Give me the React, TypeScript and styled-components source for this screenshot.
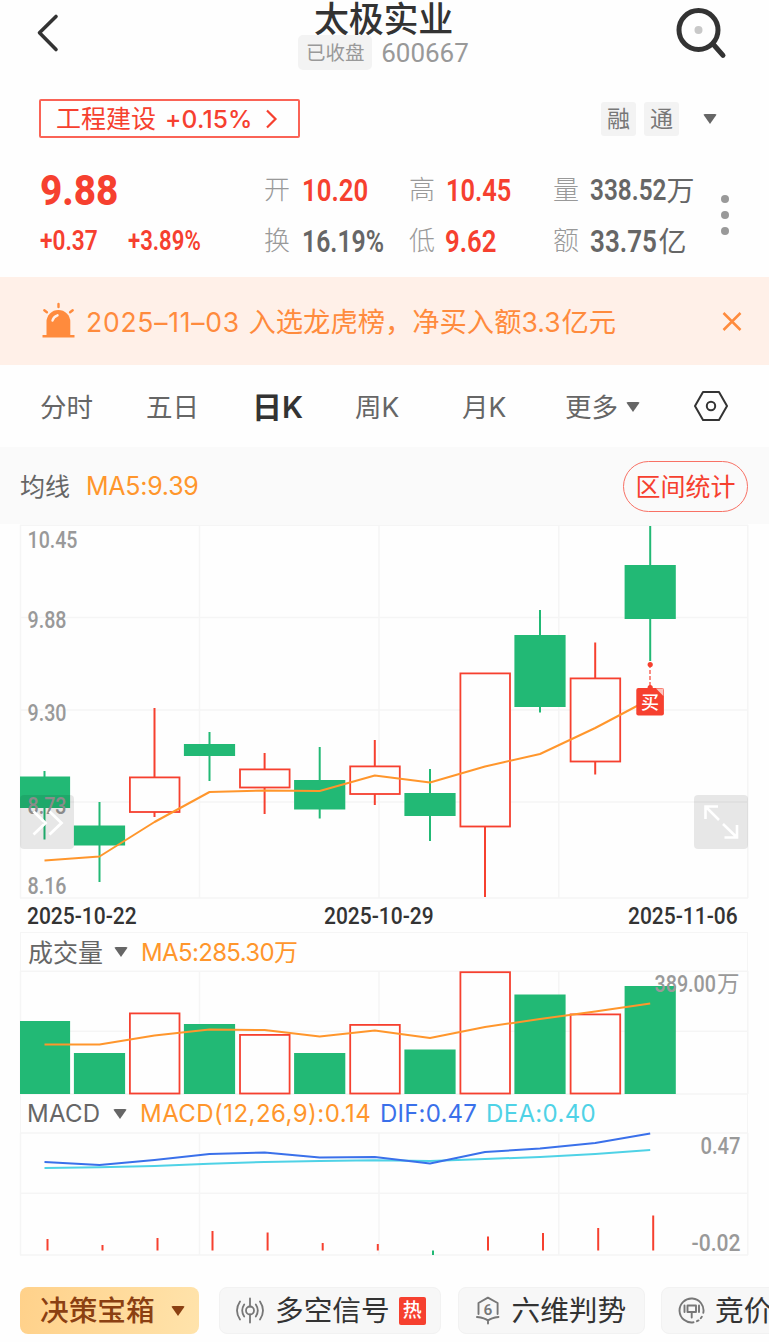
import React from "react";
import styled, { createGlobalStyle } from "styled-components";

const RED = "#f6402f";
const GREEN = "#22b975";
const ORANGE = "#ff8b3d";
const GOLD = "#ff962c";
const BLUE = "#3a70ea";
const CYAN = "#4fd2e6";
const GRID = "#f5f5f5";

const Global = createGlobalStyle`
  * { box-sizing: border-box; }
  body { margin: 0; background: #fefefe; }
`;

const Page = styled.main`
  width: 769px;
  height: 1342px;
  overflow: hidden;
  display: flex;
  flex-direction: column;
  background: #fefefe;
  color: #666;
  font-family: Inter, "Noto Sans CJK SC", sans-serif;
  white-space: nowrap;
`;

const Din = styled.span<{ w: number; size: number; squeeze?: number; weight?: number }>`
  display: inline-block;
  width: ${(p) => p.w}px;
  font-family: Roboto, sans-serif;
  font-size: ${(p) => p.size}px;
  font-weight: ${(p) => p.weight ?? 600};
  line-height: 1;
  transform: scaleX(${(p) => p.squeeze ?? 0.84});
  transform-origin: left center;
`;

const Header = styled.header`
  height: 78px;
  flex: none;
  display: grid;
  grid-template-columns: 58px 1fr 58px;
  padding: 0 36px 0 36px;
`;

const TitleBlock = styled.div`
  display: flex;
  flex-direction: column;
  align-items: center;
  padding: 0 2px 0 0;
`;

const Title = styled.h1`
  margin: 0 0 -4px;
  height: 39px;
  font-size: 35px;
  line-height: 38px;
  font-weight: 500;
  letter-spacing: -0.3px;
  color: #333;
`;

const Sub = styled.div`
  display: flex;
  align-items: center;
  gap: 9px;
  height: 35px;
`;

const StatusBadge = styled.span`
  width: 74px;
  height: 35px;
  border-radius: 5px;
  background: #f3f3f3;
  color: #999;
  font-size: 19.5px;
  line-height: 36px;
  text-align: center;
`;

const Code = styled.span`
  font-family: Roboto, sans-serif;
  font-size: 26px;
  color: #999;
`;

const TagRow = styled.div`
  height: 60px;
  flex: none;
  display: flex;
  align-items: flex-start;
  justify-content: space-between;
  padding: 21px 52px 0 39px;
`;

const SectorTag = styled.div`
  width: 261px;
  height: 39px;
  border: 2px solid #fa6356;
  border-radius: 2px;
  display: flex;
  align-items: center;
  padding: 1px 20px 0 15px;
  color: ${RED};
  font-size: 25px;
  line-height: 35px;
`;

const SectorChange = styled.span`
  margin-left: 9px;
  flex: 1;
  font-size: 24.5px;
  font-weight: 500;
  letter-spacing: 0.2px;
`;

const Marks = styled.div`
  display: flex;
  align-items: center;
  gap: 8px;
  height: 34px;
  margin-top: 3px;
`;

const Mark = styled.span`
  width: 35px;
  height: 34px;
  border-radius: 3px;
  background: #f3f3f3;
  color: #777;
  font-size: 23px;
  line-height: 35px;
  text-align: center;
`;

const Caret = styled.i<{ size?: number; h?: number; tone?: string; gap?: number }>`
  display: inline-block;
  border: solid transparent;
  border-width: ${(p) => p.h ?? 10}px ${(p) => p.size ?? 7}px 0;
  border-top-color: ${(p) => p.tone ?? "#666"};
  margin-left: ${(p) => p.gap ?? 0}px;
  border-radius: 2px;
`;

const Quote = styled.section`
  height: 139px;
  flex: none;
  display: grid;
  grid-template-columns: 224px 145px 144px 154px 1fr;
  padding-left: 40px;
`;

const QuoteColumn = styled.div`
  display: grid;
  grid-template-rows: 51px 51px;
  padding-top: 27px;
`;

const Field = styled.div<{ tone?: string }>`
  display: flex;
  align-items: center;
  color: ${(p) => p.tone ?? "#666"};
  font-size: 28px;
  line-height: 38px;
`;

const FieldLabel = styled.span<{ w?: number }>`
  width: ${(p) => p.w ?? 38}px;
  color: #999;
  font-size: 26px;
  font-weight: 300;
  padding-bottom: 2px;
`;

const More = styled.div`
  display: flex;
  flex-direction: column;
  gap: 8px;
  padding: 57px 0 0 14px;
`;

const Dot = styled.i`
  width: 8px;
  height: 8px;
  border-radius: 50%;
  background: #999;
`;

const Banner = styled.div`
  height: 88px;
  flex: none;
  display: flex;
  align-items: center;
  padding: 0 27px 0 41px;
  background: #fff0e8;
  color: ${ORANGE};
`;

const BannerText = styled.span`
  flex: 1;
  margin: 0 0 3px 9px;
  font-size: 27.3px;
`;

const BannerNumber = styled.span<{ w: number; gap?: number }>`
  display: inline-block;
  width: ${(p) => p.w}px;
  margin-right: ${(p) => p.gap ?? 0}px;
  font-size: 26.5px;
  letter-spacing: ${(p) => (p.w > 100 ? 0.75 : 0)}px;
`;

const Tabs = styled.nav`
  height: 82px;
  flex: none;
  display: grid;
  grid-template-columns: 106px 106px 103px 107px 103px 129px 1fr;
  align-items: center;
  padding-left: 40px;
`;

const Tab = styled.span<{ active?: boolean }>`
  display: flex;
  align-items: center;
  padding-top: 2px;
  font-size: ${(p) => (p.active ? 30 : 26.5)}px;
  font-weight: ${(p) => (p.active ? 600 : 400)};
  color: ${(p) => (p.active ? "#333" : "#666")};
  line-height: 40px;
`;

const AverageBar = styled.div`
  height: 77px;
  flex: none;
  display: flex;
  align-items: center;
  padding: 2px 21px 0 20px;
  background: #fafafa;
  font-size: 25px;
`;

const AverageLabel = styled.span`
  padding-bottom: 4px;
`;

const Average = styled.span`
  flex: 1;
  margin-left: 16px;
  padding-bottom: 1px;
  color: ${GOLD};
  font-size: 25px;
  letter-spacing: -0.25px;
`;

const RangeButton = styled.button`
  width: 125px;
  height: 51px;
  padding: 0 0 3px;
  border: 1.5px solid #f87165;
  border-radius: 26px;
  background: transparent;
  color: ${RED};
  font: 400 25px "Noto Sans CJK SC", sans-serif;
  line-height: 44px;
`;

const ChartArea = styled.section`
  width: 728px;
  margin: 0 0 0 20px;
  flex: none;
  position: relative;
`;

const Plot = styled.svg`
  display: block;
  overflow: visible;
  text {
    font-family: Roboto, "Noto Sans CJK SC", sans-serif;
  }
`;

const DateRow = styled.div`
  height: 34px;
  display: grid;
  grid-template-columns: 297px 304px 1fr;
  align-items: center;
  padding: 3px 0 0 7px;
  color: #333;
`;

const IndicatorRow = styled.div<{ h: number; top?: boolean }>`
  height: ${(p) => p.h}px;
  display: flex;
  align-items: center;
  padding-left: ${(p) => (p.top ? 7 : 6)}px;
  border: solid ${GRID};
  border-width: ${(p) => (p.top ? 1 : 0)}px 1px 0;
  font-size: 25px;
`;

const IndicatorName = styled.span`
  padding-bottom: 3px;
`;

const Legend = styled.span<{ tone: string; gap: number; w?: number; spacing?: number; raise?: number }>`
  width: ${(p) => (p.w ? p.w + "px" : "auto")};
  margin-left: ${(p) => p.gap}px;
  padding-bottom: ${(p) => p.raise ?? 0}px;
  color: ${(p) => p.tone};
  font-size: 24px;
  letter-spacing: ${(p) => p.spacing ?? 0}px;
`;

const Overlay = styled.button<{ side: "left" | "right" }>`
  position: absolute;
  top: 271px;
  ${(p) => p.side}: 0;
  width: 54px;
  height: 54px;
  padding: 0;
  border: 0;
  border-radius: 4px;
  background: rgba(0, 0, 0, 0.09);
`;

const Tools = styled.footer`
  display: flex;
  gap: 20px;
  width: 900px;
  padding: 31px 0 0 20px;
`;

const Tool = styled.div<{ w: number; gold?: boolean; gap?: number }>`
  flex: none;
  width: ${(p) => p.w}px;
  height: 47px;
  display: flex;
  align-items: center;
  gap: ${(p) => p.gap ?? 10}px;
  padding-left: ${(p) => (p.gold ? 20 : 16)}px;
  border-radius: 8px;
  margin-right: ${(p) => (p.gold ? 0 : -3.5)}px;
  border: ${(p) => (p.gold ? "0" : "1px solid #f2f2f2")};
  background: ${(p) => (p.gold ? "linear-gradient(100deg, #ffd18a, #ffe3ab)" : "#f7f7f7")};
  color: ${(p) => (p.gold ? "#8b4012" : "#333")};
  font-size: 28.7px;
  font-weight: ${(p) => (p.gold ? 500 : 400)};
  line-height: 45px;
`;

const Hot = styled.span`
  width: 27px;
  height: 28px;
  margin-left: -1px;
  border-radius: 2px;
  background: ${RED};
  color: #fff;
  font-size: 19px;
  font-weight: 500;
  line-height: 28px;
  text-align: center;
`;

type Candle = { x: number; up?: boolean; open: number; close: number; high: number; low: number; vol: number };

const candles: Candle[] = [
  { x: 44.5, open: 776.5, close: 808, high: 771, low: 839.5, vol: 1021 },
  { x: 99.5, open: 825.5, close: 845.5, high: 802, low: 882, vol: 1053 },
  { x: 154.5, up: true, open: 776.5, close: 812.5, high: 708, low: 817, vol: 1012.5 },
  { x: 209.5, open: 744, close: 756, high: 732, low: 781, vol: 1024 },
  { x: 264.6, up: true, open: 768.5, close: 788, high: 753, low: 814, vol: 1034 },
  { x: 319.7, open: 780, close: 809.5, high: 747, low: 818.5, vol: 1053 },
  { x: 374.8, up: true, open: 765.5, close: 794.5, high: 740, low: 805, vol: 1024 },
  { x: 430, open: 793, close: 816, high: 769, low: 841, vol: 1049.5 },
  { x: 485, up: true, open: 672.5, close: 827, high: 673, low: 897, vol: 971.3 },
  { x: 540, open: 635, close: 707, high: 610, low: 712.5, vol: 994.5 },
  { x: 595.2, up: true, open: 677.5, close: 762, high: 642.5, low: 774.5, vol: 1013.5 },
  { x: 650.2, open: 565, close: 619, high: 526, low: 661, vol: 986 },
];

const priceAverage = [860.5, 856.5, 822, 792, 790.5, 791, 775.5, 782.5, 766.5, 754, 728, 699];
const volumeAverage = [1044.5, 1044.5, 1035.5, 1029.5, 1030, 1036.5, 1030.5, 1038, 1027, 1019, 1011.5, 1003.5];
const dif = [1162, 1165, 1160, 1154, 1152.5, 1157.5, 1157, 1163.5, 1152, 1148.5, 1143, 1133.5];
const dea = [1168, 1167.3, 1166, 1163.7, 1162, 1161, 1160.3, 1161, 1159, 1157, 1154, 1150];
const histogram = [1239, 1245, 1238, 1231, 1232.5, 1243, 1244, 1255, 1236.5, 1233, 1228, 1215.5];

const Line = ({ ys, color }: { ys: number[]; color: string }) => (
  <polyline
    points={ys.map((y, i) => `${candles[i].x},${y}`).join(" ")}
    fill="none"
    stroke={color}
    strokeWidth="2"
    strokeLinejoin="round"
  />
);

const Grid = ({ top, bottom, rows }: { top: number; bottom: number; rows: number[] }) => (
  <g stroke={GRID} strokeWidth="1.5">
    {[20.5, 199.5, 379, 558.8, 747.8].map((x) => (
      <line key={x} x1={x} x2={x} y1={top} y2={bottom} />
    ))}
    {rows.map((y) => (
      <line key={y} x1="20" x2="748" y1={y} y2={y} />
    ))}
  </g>
);

const Body = ({ c, top, bottom }: { c: Candle; top: number; bottom: number }) => {
  if (c.up)
    return <rect x={c.x - 24.6} y={top + 0.9} width="49.6" height={bottom - top - 1.4} fill="#fefefe" stroke={RED} strokeWidth="1.8" />;
  const left = Math.max(20, c.x - 25.6);
  return <rect x={left} y={top} width={c.x + 25.6 - left} height={bottom - top} fill={GREEN} />;
};

const axis = [
  { y: 548, t: "10.45", w: 50 },
  { y: 627.5, t: "9.88", w: 39 },
  { y: 721, t: "9.30", w: 39 },
  { y: 814, t: "8.73", w: 39 },
  { y: 894, t: "8.16", w: 39 },
];

const PriceChart = () => (
  <Plot width="728" height="374" viewBox="20 524 728 374">
    <Grid top={525} bottom={898} rows={[525.3, 617.5, 710, 802, 898]} />
    {candles.map((c) => (
      <g key={c.x}>
        <line x1={c.x} x2={c.x} y1={c.high} y2={c.low} stroke={c.up ? RED : GREEN} strokeWidth="2" />
        <Body c={c} top={c.open} bottom={c.close} />
      </g>
    ))}
    <Line ys={priceAverage} color={GOLD} />
    {axis.map((a) => (
      <text key={a.t} x="27.5" y={a.y} fontSize="23.5" fontWeight="500" fill="#999" textLength={a.w} lengthAdjust="spacingAndGlyphs">
        {a.t}
      </text>
    ))}
    <line x1="650" x2="650" y1="664" y2="687" stroke={RED} strokeWidth="1.2" strokeDasharray="4 2" />
    <circle cx="650.2" cy="664.5" r="2.6" fill={RED} />
    <circle cx="650.2" cy="687.5" r="2.6" fill={RED} />
    <rect x="636.3" y="688" width="27.6" height="27.5" rx="2" fill={RED} />
    <path d="M656 688.5h7.4v7.4z" fill="#fcc5bf" />
    <text x="650" y="708.5" fontSize="18" fontWeight="500" fill="#fff" textAnchor="middle">
      买
    </text>
  </Plot>
);

const VolumeChart = () => (
  <Plot width="728" height="123" viewBox="20 971 728 123">
    <Grid top={971} bottom={1094} rows={[971.3, 1031.3, 1094]} />
    {candles.map((c) => (
      <Body key={c.x} c={c} top={c.vol} bottom={1094} />
    ))}
    <Line ys={volumeAverage} color={GOLD} />
    <text x="654.5" y="992" fontSize="23.5" fontWeight="500" fill="#999">
      <tspan textLength="61.5" lengthAdjust="spacingAndGlyphs">389.00</tspan>
      <tspan x="717" fontSize="22.500" fontWeight="400">万</tspan>
    </text>
  </Plot>
);

const MacdChart = () => (
  <Plot width="728" height="123" viewBox="20 1133 728 123">
    <Grid top={1133} bottom={1255} rows={[1133, 1193.3, 1255]} />
    {histogram.map((y, i) => (
      <line key={i} x1={candles[i].x + 3} x2={candles[i].x + 3} y1="1250.5" y2={y} stroke={y > 1250.5 ? GREEN : RED} strokeWidth="2" />
    ))}
    <Line ys={dea} color={CYAN} />
    <Line ys={dif} color={BLUE} />
    <g fill="#999" fontSize="23.5" fontWeight="500">
      <text x="700.5" y="1154" textLength="40" lengthAdjust="spacingAndGlyphs">
        0.47
      </text>
      <text x="691.5" y="1251" textLength="49" lengthAdjust="spacingAndGlyphs">
        -0.02
      </text>
    </g>
  </Plot>
);

const BackIcon = () => (
  <svg width="24" height="60" viewBox="36 0 24 60" fill="none" stroke="#333" strokeWidth="3.6" strokeLinecap="round" strokeLinejoin="round">
    <path d="M56 16.5 39.5 32.8 56 49.5" />
  </svg>
);

const SearchIcon = () => (
  <svg width="58" height="60" viewBox="675 0 58 60" fill="none" stroke="#333" strokeWidth="5" strokeLinecap="round">
    <circle cx="698.5" cy="30" r="19.5" />
    <path d="m713 44 10 11.3" />
    <circle cx="698.5" cy="30" r="4" fill="#c8c8c8" stroke="none" />
  </svg>
);

const AlarmIcon = () => (
  <svg width="36" height="38" viewBox="41 301 36 38" fill={ORANGE}>
    <path d="M46.5 334v-13a11.8 11.8 0 0 1 23.800 0v13z" />
    <path d="M42.500 334h32v2.6h-32z" />
    <path d="M58.500 303v3M44.300 309.300l2.600 2M72.700 309.300l-2.600 2" stroke={ORANGE} strokeWidth="2.4" strokeLinecap="round" />
    <path d="M52.500 319.500c.6-2.500 2.200-4.300 5-5.200" fill="none" stroke="#fff0e8" strokeWidth="2.4" strokeLinecap="round" />
  </svg>
);

const SignalIcon = () => (
  <svg width="29" height="27" viewBox="236 1297 29 27" fill="none" stroke="#777" strokeWidth="1.8" strokeLinecap="round">
    <circle cx="250" cy="1310.5" r="4" />
    <path d="M250 1298.500v8M250 1314.500v8M244.200 1304.500q-4 6 0 12M255.800 1304.500q4 6 0 12M240 1301.500q-6 9 0 18M260 1301.500q6 9 0 18" />
  </svg>
);

const HexIcon = () => (
  <svg width="25" height="29" viewBox="475.500 1295.500 25 29" fill="none" stroke="#777" strokeWidth="1.9" strokeLinecap="round" strokeLinejoin="round">
    <path d="M479 1313.500v-11l9.400-5.300 9.700 5.300v11M477.500 1316.500q8 1 11 3.500 3-2.500 10.500-3.500M488.500 1320.500v2.500" />
    <text x="488.500" y="1314.800" fontSize="15.500" textAnchor="middle" fill="#777" stroke="none" fontWeight="600" fontFamily="Roboto, sans-serif">
      6
    </text>
  </svg>
);

const AuctionIcon = () => (
  <svg width="27" height="27" viewBox="678.500 1297 27 27" fill="none" stroke="#777" strokeWidth="1.9" strokeLinecap="round" strokeLinejoin="round">
    <path d="M694 1322.300a12 12 0 1 1 9.800-9.500M697.500 1321.200l1.500-.8M701.300 1318.200l1-1.400" />
    <path d="M688 1305.500h8.500v6.500H688zM692.200 1312v5.500M685 1305.500v6.500M699.500 1305.500v6.500" />
  </svg>
);

export default function App() {
  return (
    <Page>
      <Global />
      <Header>
        <BackIcon />
        <TitleBlock>
          <Title>太极实业</Title>
          <Sub>
            <StatusBadge>已收盘</StatusBadge>
            <Code>600667</Code>
          </Sub>
        </TitleBlock>
        <SearchIcon />
      </Header>

      <TagRow>
        <SectorTag>
          工程建设
          <SectorChange>+0.15%</SectorChange>
          <svg width="13" height="20" viewBox="0 0 13 20" fill="none" stroke={RED} strokeWidth="2.2">
            <path d="m2 1.500 8.500 8.500L2 18.500" />
          </svg>
        </SectorTag>
        <Marks>
          <Mark>融</Mark>
          <Mark>通</Mark>
          <Caret gap={16} />
        </Marks>
      </TagRow>

      <Quote>
        <QuoteColumn>
          <Field tone={RED}>
            <Din w={80} size={42} weight={800} squeeze={0.92}>9.88</Din>
          </Field>
          <Field tone={RED}>
            <Din w={87.5} size={27}>+0.37</Din>
            <Din w={80} size={27} squeeze={0.82}>+3.89%</Din>
          </Field>
        </QuoteColumn>
        <QuoteColumn>
          <Field tone={RED}>
            <FieldLabel>开</FieldLabel>
            <Din w={67} size={31} squeeze={0.83}>10.20</Din>
          </Field>
          <Field>
            <FieldLabel>换</FieldLabel>
            <Din w={80} size={31} squeeze={0.8}>16.19%</Din>
          </Field>
        </QuoteColumn>
        <QuoteColumn>
          <Field tone={RED}>
            <FieldLabel w={37}>高</FieldLabel>
            <Din w={67} size={31} squeeze={0.82}>10.45</Din>
          </Field>
          <Field tone={RED}>
            <FieldLabel w={36}>低</FieldLabel>
            <Din w={67} size={31} squeeze={0.83}>9.62</Din>
          </Field>
        </QuoteColumn>
        <QuoteColumn>
          <Field>
            <FieldLabel w={36.5}>量</FieldLabel>
            <Din w={77} size={29.5} squeeze={0.825}>338.52</Din>
            万
          </Field>
          <Field>
            <FieldLabel w={36.5}>额</FieldLabel>
            <Din w={69} size={31}>33.75</Din>
            亿
          </Field>
        </QuoteColumn>
        <More>
          <Dot />
          <Dot />
          <Dot />
        </More>
      </Quote>

      <Banner>
        <AlarmIcon />
        <BannerText>
          <BannerNumber w={152} gap={10.5}>2025–11–03</BannerNumber>
          入选龙虎榜，净买入额
          <BannerNumber w={40}>3.3</BannerNumber>
          亿元
        </BannerText>
        <svg width="20" height="20" viewBox="0 0 20 20" stroke={ORANGE} strokeWidth="2.500">
          <path d="m1.500 2 17 17m0-17-17 17" />
        </svg>
      </Banner>

      <Tabs>
        <Tab>分时</Tab>
        <Tab>五日</Tab>
        <Tab active>日K</Tab>
        <Tab>周K</Tab>
        <Tab>月K</Tab>
        <Tab>
          更多
          <Caret gap={8} />
        </Tab>
        <svg width="34" height="32" viewBox="0 0 34 32" fill="none" stroke="#333" strokeWidth="2" strokeLinejoin="round">
          <path d="M9 2h16l8 14-8 14H9L1 16z" />
          <circle cx="17" cy="16" r="4.200" />
        </svg>
      </Tabs>

      <AverageBar>
        <AverageLabel>均线</AverageLabel>
        <Average>MA5:9.39</Average>
        <RangeButton>区间统计</RangeButton>
      </AverageBar>

      <ChartArea>
        <PriceChart />
        <Overlay side="left">
          <svg width="54" height="54" viewBox="0 0 54 54" fill="none" stroke="#fff" strokeWidth="2.800">
            <path d="m13.500 16.500 12 11.500-12 11.500M29.500 16.500l12 11.500-12 11.500" />
          </svg>
        </Overlay>
        <Overlay side="right">
          <svg width="54" height="54" viewBox="0 0 54 54" fill="none" stroke="#fff" strokeWidth="2.600">
            <path d="M11.500 24V11.500H24M11.500 11.500 25 25M43 30v12.500H30.500M43 42.500 29 29" />
          </svg>
        </Overlay>
        <DateRow>
          <Din w={110} size={23.5} weight={500} squeeze={0.893}>2025-10-22</Din>
          <Din w={110} size={23.5} weight={500} squeeze={0.893}>2025-10-29</Din>
          <Din w={110} size={23.5} weight={500} squeeze={0.893}>2025-11-06</Din>
        </DateRow>
        <IndicatorRow h={39} top>
          <IndicatorName>成交量</IndicatorName>
          <Caret gap={11} />
          <Legend tone={GOLD} gap={13} spacing={-0.65} raise={3}>MA5:285.30万</Legend>
        </IndicatorRow>
        <VolumeChart />
        <IndicatorRow h={39}>
          <Legend tone="#666" gap={0} w={75} spacing={0.3}>MACD</Legend>
          <Caret gap={11} />
          <Legend tone={GOLD} gap={13} w={232} spacing={0.45}>MACD(12,26,9):0.14</Legend>
          <Legend tone={BLUE} gap={8} w={97} spacing={0.2}>DIF:0.47</Legend>
          <Legend tone={CYAN} gap={9} spacing={0.35}>DEA:0.40</Legend>
        </IndicatorRow>
        <MacdChart />
      </ChartArea>

      <Tools>
        <Tool w={179} gold gap={16}>
          决策宝箱
          <Caret tone="#8b4012" />
        </Tool>
        <Tool w={222}>
          <SignalIcon />
          多空信号
          <Hot>热</Hot>
        </Tool>
        <Tool w={187} gap={12}>
          <HexIcon />
          六维判势
        </Tool>
        <Tool w={222} gap={10}>
          <AuctionIcon />
          竞价
        </Tool>
      </Tools>
    </Page>
  );
}
